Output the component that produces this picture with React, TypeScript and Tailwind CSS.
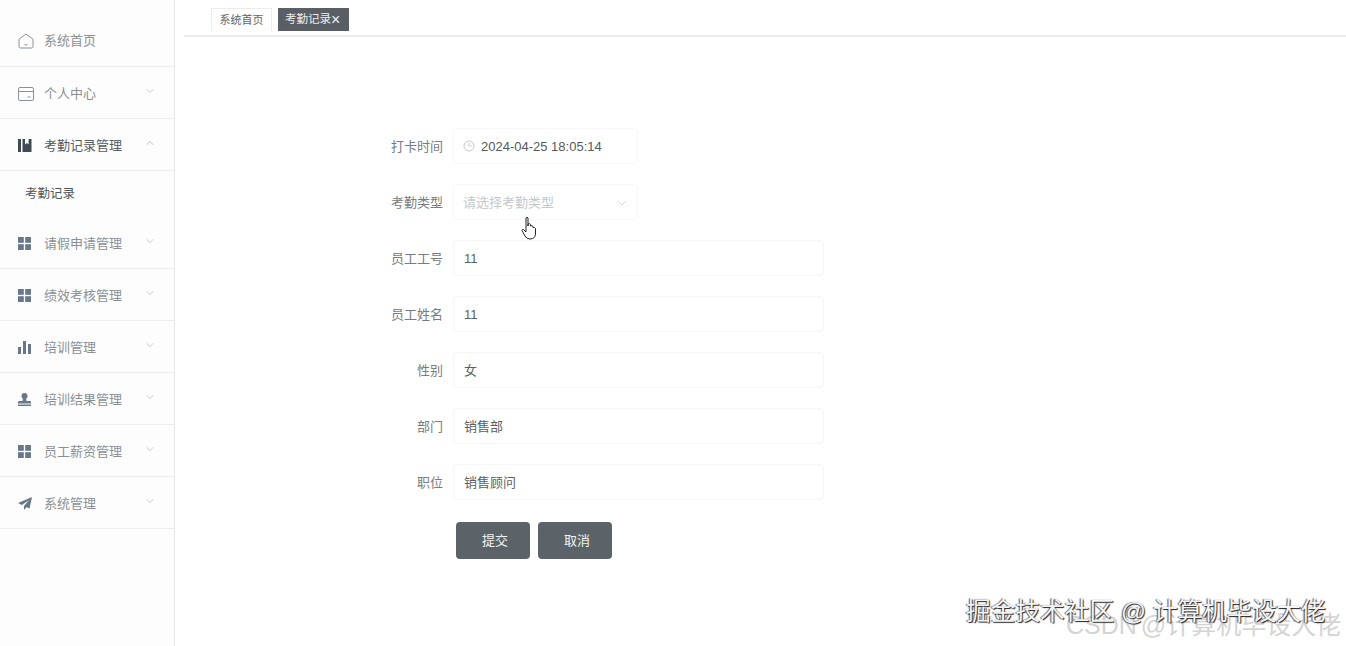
import { ChevronDown, ChevronUp } from "lucide-react";
import type { ReactNode } from "react";

const cjk = "font-['Liberation_Sans','Noto_Sans_CJK_SC',sans-serif]";

function HomeIcon() {
  return (
    <svg width="16" height="16" viewBox="0 0 16 16" fill="none" stroke="#8a9299" strokeWidth="1">
      <path d="M8 1 L15 6.2 V13.5 Q15 15 13.5 15 H2.5 Q1 15 1 13.5 V6.2 Z" />
      <path d="M6.5 11.5 Q8 12.5 9.5 11.5" />
    </svg>
  );
}

function WalletIcon() {
  return (
    <svg width="16" height="14" viewBox="0 0 16 14" fill="none" stroke="#8a9299" strokeWidth="1">
      <rect x="0.5" y="0.5" width="15" height="13" rx="1.5" />
      <path d="M0.5 4.5 H15.5 M9.5 10 H12.5" />
    </svg>
  );
}

function BookIcon() {
  return (
    <svg width="14" height="13" viewBox="0 0 14 13" fill="#3f4a54">
      <rect x="0" y="0" width="3" height="13" />
      <path d="M4.5 0 H7 V5.5 L8.8 4 L10.6 5.5 V0 H13.5 V13 H4.5 Z" />
    </svg>
  );
}

function GridIcon() {
  return (
    <svg width="13" height="13" viewBox="0 0 13 13" fill="#68788a">
      <rect x="0" y="0" width="5.8" height="5.8" />
      <rect x="7.2" y="0" width="5.8" height="5.8" />
      <rect x="0" y="7.2" width="5.8" height="5.8" />
      <rect x="7.2" y="7.2" width="5.8" height="5.8" />
    </svg>
  );
}

function BarsIcon() {
  return (
    <svg width="13" height="13" viewBox="0 0 13 13" fill="#68788a">
      <rect x="0" y="6" width="3" height="7" />
      <rect x="5" y="0" width="3" height="13" />
      <rect x="10" y="3" width="3" height="10" />
    </svg>
  );
}

function StampIcon() {
  return (
    <svg width="13" height="13" viewBox="0 0 13 13" fill="#68788a">
      <circle cx="6.5" cy="3" r="3" />
      <path d="M5 5 H8 L8.5 8 H12 Q13 8 13 9 V10.5 H0 V9 Q0 8 1 8 H4.5 Z" />
      <rect x="0" y="11.5" width="13" height="1.5" />
    </svg>
  );
}

function PlaneIcon() {
  return (
    <svg width="14" height="13" viewBox="0 0 14 13" fill="#68788a">
      <path d="M14 0 L0 6 L4 8 L11 3 L6 9 V13 L8.5 10.2 L11.5 11.5 Z" />
    </svg>
  );
}

type MenuItem = {
  label: string;
  icon: ReactNode;
  arrow?: "down" | "up";
  active?: boolean;
};

const menu: MenuItem[] = [
  { label: "系统首页", icon: <HomeIcon /> },
  { label: "个人中心", icon: <WalletIcon />, arrow: "down" },
  { label: "考勤记录管理", icon: <BookIcon />, arrow: "up", active: true },
  { label: "请假申请管理", icon: <GridIcon />, arrow: "down" },
  { label: "绩效考核管理", icon: <GridIcon />, arrow: "down" },
  { label: "培训管理", icon: <BarsIcon />, arrow: "down" },
  { label: "培训结果管理", icon: <StampIcon />, arrow: "down" },
  { label: "员工薪资管理", icon: <GridIcon />, arrow: "down" },
  { label: "系统管理", icon: <PlaneIcon />, arrow: "down" },
];

function MenuRow({ item }: { item: MenuItem }) {
  return (
    <div className={`relative flex h-[52px] items-center border-b border-[#eceef0] pl-[18px] ${item.arrow ? "pt-[2px]" : ""}`}>
      <span className="flex w-[26px] justify-start">{item.icon}</span>
      <span className={item.active ? "text-[13px] text-[#555b60]" : "text-[13px] text-[#8b9095]"}>
        {item.label}
      </span>
      {item.arrow === "down" && (
        <ChevronDown className="absolute right-[18px] top-[18px] text-[#b4b8bc]" size={12} strokeWidth={1.5} />
      )}
      {item.arrow === "up" && (
        <ChevronUp className="absolute right-[18px] top-[18px] text-[#a4a8ac]" size={12} strokeWidth={1.5} />
      )}
    </div>
  );
}

function Field({ label, children }: { label: string; children: ReactNode }) {
  return (
    <div className="flex h-[36px] items-center">
      <label className="w-[62px] pt-[2px] pr-[10px] text-right text-[13px] text-[#777c80]">{label}</label>
      {children}
    </div>
  );
}

function TextBox({ value }: { value: string }) {
  return (
    <div className="flex h-[36px] w-[371px] items-center rounded border border-[#f6f6f7] pl-[10px] pt-[2px] text-[13px] text-[#5a5f63]">
      {value}
    </div>
  );
}

export default function App() {
  const rows = [
    { label: "员工工号", value: "11" },
    { label: "员工姓名", value: "11" },
    { label: "性别", value: "女" },
    { label: "部门", value: "销售部" },
    { label: "职位", value: "销售顾问" },
  ];

  return (
    <div className={`relative flex h-[646px] w-[1346px] overflow-hidden bg-white ${cjk}`}>
      <aside className="h-full w-[175px] shrink-0 border-r border-[#e6e8ea] bg-[#fdfdfe] pt-[15px]">
        {menu.slice(0, 3).map((item) => (
          <MenuRow key={item.label} item={item} />
        ))}
        <div className="flex h-[46px] items-center pl-[25px] text-[12.5px] text-[#50555a]">考勤记录</div>
        {menu.slice(3).map((item) => (
          <MenuRow key={item.label} item={item} />
        ))}
      </aside>

      <main className="flex-1">
        <div className="ml-[9px] flex h-[37px] items-start gap-[6px] border-b-2 border-[#ebedef] pl-[27px] pt-[8px]">
          <div className="flex h-[23px] w-[61px] items-center justify-center border border-b-0 border-[#ececec] text-[11px] text-[#5f6468]">
            系统首页
          </div>
          <div className="flex h-[23px] w-[71px] items-center bg-[#5a5f66] pl-[7px] text-[11.5px] text-[#eceef0]">
            考勤记录<span className="text-[16px] leading-none">×</span>
          </div>
        </div>

        <form className="ml-[216px] mt-[91px] flex flex-col gap-[20px]">
          <Field label="打卡时间">
            <div className="flex h-[36px] w-[185px] items-center rounded border border-[#f8f8f9] pl-[9px] pt-[2px] text-[13px] text-[#55595d]">
              <svg width="12" height="12" viewBox="0 0 12 12" fill="none" stroke="#c8cbce" strokeWidth="1" className="mb-[3px] mr-[6px]">
                <circle cx="6" cy="6" r="5" />
                <path d="M6 3 V6 H8.5" />
              </svg>
              2024-04-25 18:05:14
            </div>
          </Field>
          <Field label="考勤类型">
            <div className="flex h-[36px] w-[185px] items-center justify-between rounded border border-[#f8f8f9] pl-[9px] pr-[7px] pt-[2px] text-[13px] text-[#c6c9cc]">
              请选择考勤类型
              <ChevronDown size={16} strokeWidth={1} className="text-[#c4c7ca]" />
            </div>
          </Field>
          {rows.map((row) => (
            <Field key={row.label} label={row.label}>
              <TextBox value={row.value} />
            </Field>
          ))}
          <div className="ml-[65px] mt-[2px] flex gap-[8px]">
            <button type="button" className="h-[37px] w-[74px] rounded bg-[#5b6368] pl-[4px] text-[13px] text-[#f2f3f4]">
              提交
            </button>
            <button type="button" className="h-[37px] w-[74px] rounded bg-[#5b6368] pl-[4px] text-[13px] text-[#f2f3f4]">
              取消
            </button>
          </div>
        </form>
      </main>

      {/* mouse pointer caught in the recording */}
      <svg width="16" height="24" viewBox="0 0 16 24" className="absolute left-[521px] top-[216px]" fill="#fff" stroke="#222" strokeWidth="1">
        <path d="M5 2 Q6 0.5 7 2 V10 V8 Q8.5 7 9.5 8.5 V10 Q11 9 12 10.5 V11.5 Q13.5 11 14.5 12.5 V18 Q14 23 9 23 Q5.5 23 4 20 L1 14.5 Q1 13 2.5 13.5 L5 16 Z" />
      </svg>

      {/* watermarks on top of the video frame */}
      <div className="absolute left-[1066px] top-[609px] whitespace-nowrap text-[25px] leading-[32px] text-[#d4d4d4] [word-spacing:-3px]">
        CSDN @计算机毕设大佬
      </div>
      <div className="absolute left-[966px] top-[596px] whitespace-nowrap text-[24.7px] leading-[32px] text-[#f4f4f4] [text-shadow:1px_1px_1px_#222,-1px_0_1px_#555]">
        掘金技术社区 @ 计算机毕设大佬
      </div>
    </div>
  );
}
